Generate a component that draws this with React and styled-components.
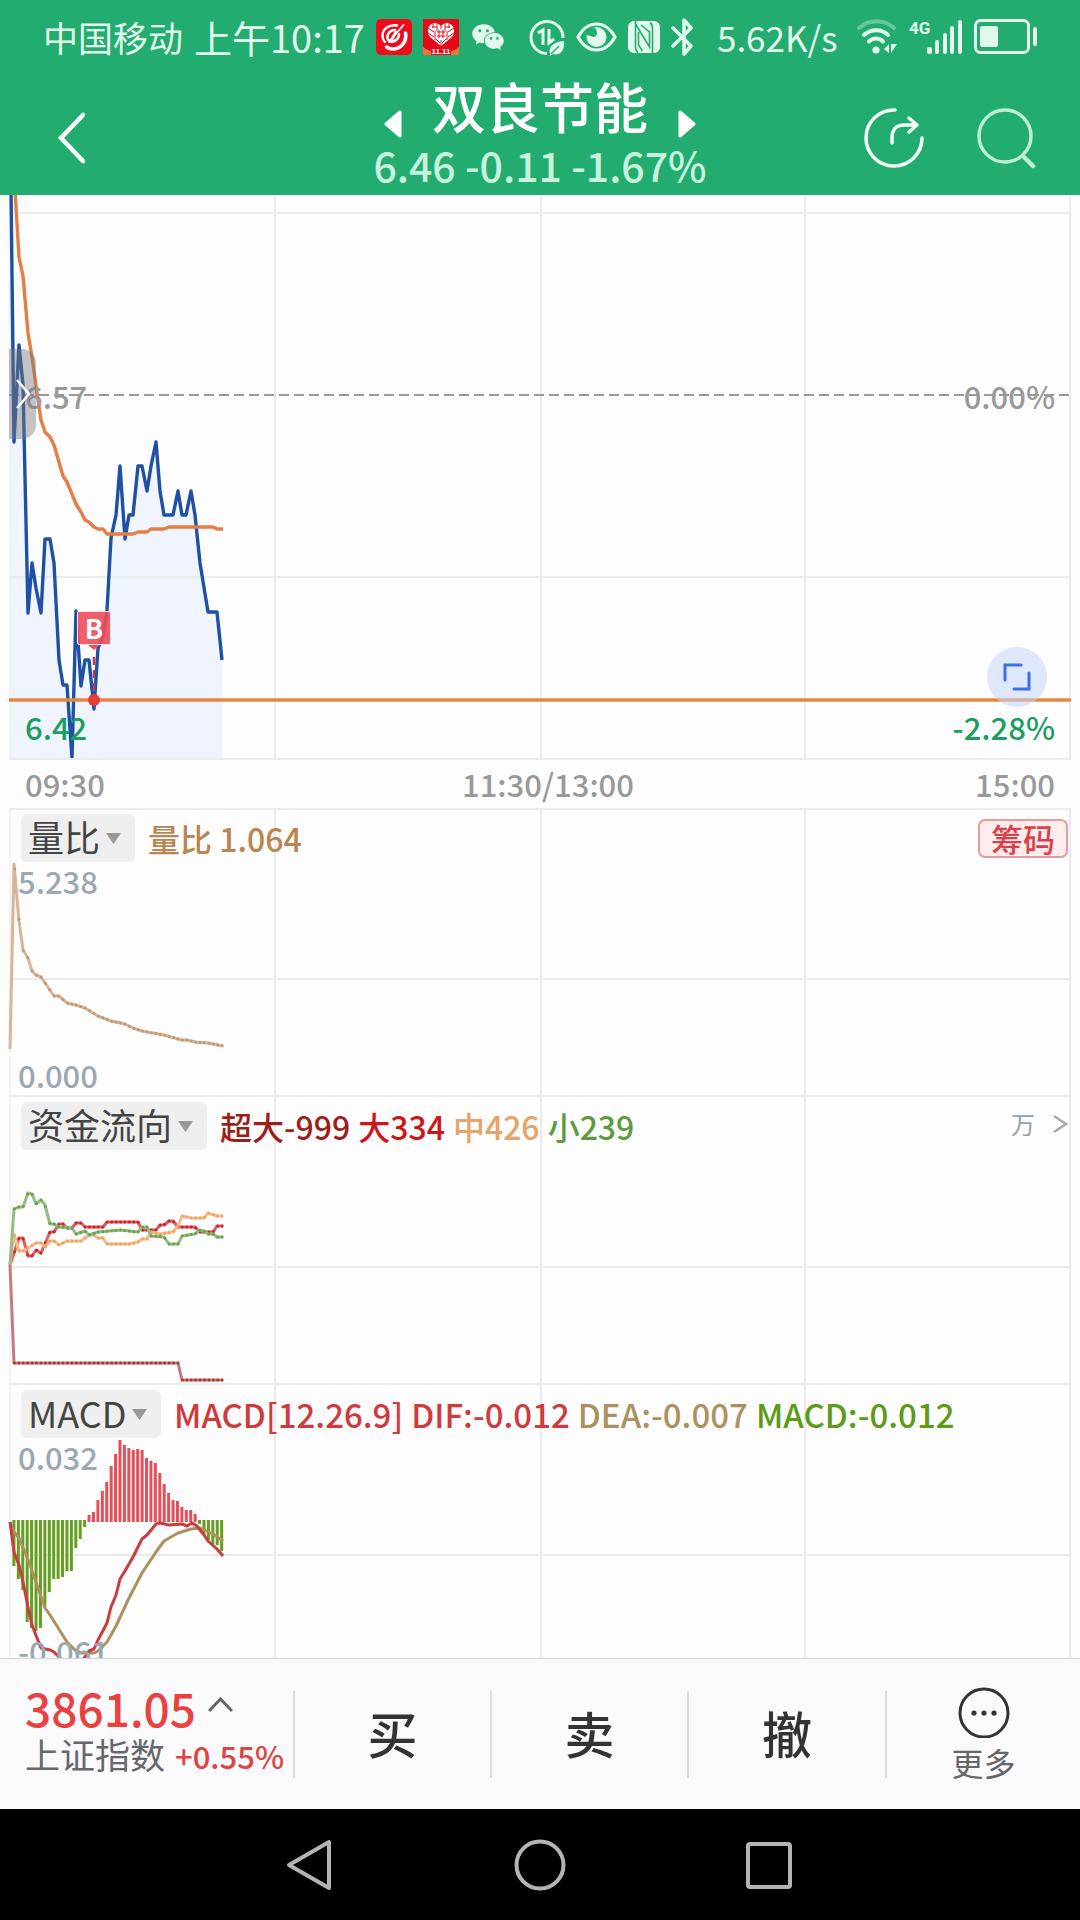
import React from "react";
import styled, { createGlobalStyle } from "styled-components";
import { AiFillWechat } from "react-icons/ai";

const GlobalStyle = createGlobalStyle`
  *, *::before, *::after { box-sizing: border-box; }
  body { margin: 0; background: #000; }
  body, button, select { font-family: "Noto Sans CJK SC", "Noto Sans", sans-serif; }
  button { margin: 0; padding: 0; border: 0; background: none; color: inherit; cursor: pointer; }
  svg { display: block; flex: none; }
`;

const Screen = styled.div`
  display: flex;
  flex-direction: column;
  height: 100vh;
  background: #fdfdfd;
`;

/* ---------- header ---------- */

const Header = styled.header`
  flex: none;
  background: #23ac6f;
  color: #fff;
`;

const StatusBar = styled.div`
  display: flex;
  align-items: center;
  justify-content: space-between;
  height: 74px;
  padding: 0 43px 1px 43px;
  color: #e2f8ec;
`;

const StatusGroup = styled.div`
  display: flex;
  align-items: center;
  gap: ${(p) => p.$gap}px;
`;

const StatusText = styled.span`
  font-size: ${(p) => p.$size}px;
  line-height: 44px;
  white-space: nowrap;
`;

const TitleBar = styled.div`
  display: grid;
  grid-template-columns: 1fr auto 1fr;
  align-items: end;
  padding: 0 43px 9px 56px;
`;

const TitleSide = styled.div`
  display: flex;
  justify-content: ${(p) => (p.$end ? "flex-end" : "flex-start")};
  gap: 50px;
  padding-bottom: 17px;
`;

const TitleCenter = styled.div`
  display: flex;
  flex-direction: column;
  align-items: center;
  gap: 4px;
  margin-right: 13px;
`;

const TitleRow = styled.div`
  display: flex;
  align-items: flex-end;
  gap: 30px;
`;

const StockName = styled.h1`
  margin: 0;
  font-size: 54px;
  line-height: 64px;
  font-weight: 500;
`;

const Quote = styled.div`
  font-size: 41px;
  line-height: 44px;
  font-weight: 500;
  color: #c8f2dd;
  white-space: pre;
`;

/* ---------- charts ---------- */

const Charts = styled.main`
  flex: 1;
  min-height: 0;
  overflow: hidden;
`;

const ChartArt = styled.svg`
  position: absolute;
  inset: 0;
  width: 100%;
  height: 100%;
`;

const PricePanel = styled.section`
  position: relative;
  display: flex;
  flex-direction: column;
  justify-content: flex-end;
  gap: 291px;
  height: 563px;
  padding: 0 25px 11px;
`;

const AxisRow = styled.div`
  position: relative;
  display: flex;
  justify-content: space-between;
  font-size: 31px;
  line-height: 40px;
  font-weight: 500;
  color: ${(p) => p.$color};
`;

const TimeAxis = styled.div`
  display: grid;
  grid-template-columns: 23fr 27fr auto;
  margin: 0 9px;
  padding: 0 16px;
  border-top: 2px solid #ebebeb;
  font-size: 31px;
  line-height: 48px;
  font-weight: 500;
  color: #999;
`;

const IndicatorPanel = styled.section`
  position: relative;
  display: flex;
  flex-direction: column;
  height: 288px;
  padding: 6px 12px 2px 18px;
`;

const PanelHead = styled.div`
  position: relative;
  display: flex;
  align-items: center;
  gap: 13px;
  margin-left: 3px;
`;

const Picker = styled.label`
  display: flex;
  align-items: center;
  height: 48px;
  padding-right: 13px;
  border-radius: 6px;
  background: #efefef;
`;

const PickerSelect = styled.select`
  appearance: none;
  height: 48px;
  margin: 0;
  padding: 0 4px 4px 7px;
  border: 0;
  background: none;
  color: #444;
  font-size: 36px;
  line-height: 44px;
`;

const Legend = styled.div`
  display: flex;
  gap: ${(p) => p.$gap}px;
  font-size: ${(p) => p.$size}px;
  line-height: 48px;
  font-weight: 500;
  white-space: nowrap;
`;

const LegendItem = styled.span`
  color: ${(p) => p.$color};
`;

const HeadEnd = styled.div`
  display: flex;
  align-items: center;
  align-self: ${(p) => (p.$top ? "flex-start" : "center")};
  gap: 18px;
  height: ${(p) => (p.$top ? 43 : 48)}px;
  margin-left: auto;
`;

const ChipButton = styled.button`
  height: 39px;
  padding: 0 11px;
  border: 2px solid #e59a9c;
  border-radius: 7px;
  background: #ffeded;
  color: #dc414b;
  font-size: 32px;
  line-height: 32px;
  font-weight: 500;
`;

const UnitText = styled.span`
  font-size: 24px;
  line-height: 36px;
  color: #91a1af;
`;

const LinkButton = styled.button`
  display: flex;
`;

const ScaleLabel = styled.div`
  position: relative;
  margin-top: ${(p) => (p.$bottom ? "auto" : "0")};
  font-size: 31px;
  line-height: 38px;
  font-weight: 500;
  color: #9aa8b3;
`;

const DrawerHandle = styled.button`
  position: absolute;
  left: 9px;
  top: 154px;
  display: flex;
  align-items: center;
  justify-content: center;
  width: 27px;
  height: 90px;
  border-radius: 0 14px 14px 0;
  background: rgba(120, 120, 120, 0.44);
`;

const ExpandButton = styled.button`
  position: absolute;
  right: 33px;
  bottom: 51px;
  display: flex;
  align-items: center;
  justify-content: center;
  width: 60px;
  height: 60px;
  border-radius: 50%;
  background: rgba(196, 214, 251, 0.55);
`;

const BuyFlag = styled.div`
  position: absolute;
  left: 77px;
  top: 416px;
  width: 34px;
  height: 34px;
  border: 1px solid #fde4e6;
  border-radius: 2px;
  background: rgba(238, 76, 90, 0.9);
  color: #fff;
  font-size: 27px;
  line-height: 32px;
  font-weight: 700;
  text-align: center;
`;

/* ---------- footer ---------- */

const TradeBar = styled.footer`
  flex: none;
  display: grid;
  grid-template-columns: 293fr 197fr 197fr 198fr 195fr;
  align-items: center;
  height: 151px;
  border-top: 1px solid #d3d4d8;
  background: #fafafc;
`;

const IndexButton = styled.button`
  display: flex;
  flex-direction: column;
  align-items: flex-start;
  padding: 0 0 8px 25px;
  text-align: left;
  white-space: nowrap;
`;

const IndexLine = styled.span`
  display: flex;
  align-items: ${(p) => p.$align || "center"};
  gap: ${(p) => p.$gap}px;
`;

const IndexValue = styled.span`
  font-size: 46px;
  line-height: 50px;
  font-weight: 500;
  color: #e8413f;
`;

const IndexName = styled.span`
  font-size: 35px;
  line-height: 44px;
  color: #66666b;
`;

const IndexChange = styled.span`
  font-size: 31px;
  line-height: 44px;
  font-weight: 500;
  color: #dd4442;
`;

const TradeButton = styled.button`
  height: 87px;
  padding-bottom: 4px;
  border-left: 2px solid #dcdcde;
  color: #333;
  font-size: 50px;
  line-height: 72px;
  font-weight: 500;
`;

const MoreButton = styled.button`
  display: flex;
  flex-direction: column;
  align-items: center;
  justify-content: center;
  gap: 4px;
  height: 87px;
  border-left: 2px solid #dcdcde;
  color: #666;
  font-size: 32px;
  line-height: 40px;
`;

const SystemNav = styled.nav`
  flex: none;
  display: flex;
  align-items: center;
  justify-content: center;
  gap: 178px;
  height: 111px;
  background: #000;
`;

/* ---------- chart data ---------- */

const STEP = 4.42;
const GRID_X = [275, 541, 805];

const PRICE = [[11,190],[14,442],[19,345],[23,385],[28,613],[32,563],[36,588],[41,613],[45,539],[50,539],[54,563],[59,660],[63,685],[67,685],[72,758],[76,611],[81,686],[85,660],[89,660],[94,709],[98,648],[103,636],[107,610],[111,538],[116,515],[120,466],[125,539],[129,515],[133,515],[138,466],[142,466],[147,491],[151,466],[156,442],[160,491],[164,515],[173,515],[178,491],[182,515],[186,515],[191,491],[195,515],[200,563],[208,612],[217,612],[222,660]];
const AVERAGE = [[15,190],[19,257],[23,276],[28,333],[32,357],[37,393],[41,420],[45,432],[50,437],[54,445],[63,476],[67,482],[76,504],[81,512],[85,520],[89,522],[94,527],[98,529],[103,529],[107,534],[133,534],[138,532],[147,532],[151,529],[164,529],[169,527],[213,527],[217,529],[223,529]];
const RATIO = [[10,1049],[14,864],[19,921],[23,950],[28,958],[32,971],[36,975],[41,977],[54,996],[59,996],[67,1003],[76,1005],[85,1008],[98,1016],[111,1021],[125,1024],[133,1028],[142,1031],[164,1035],[182,1040],[187,1040],[195,1042],[208,1043],[223,1046]];
const FLOW_SMALL = [[10,1265],[14,1209],[19,1207],[23,1207],[28,1193],[32,1194],[36,1204],[41,1200],[45,1205],[50,1224],[54,1224],[59,1227],[72,1228],[76,1234],[85,1231],[89,1235],[98,1232],[120,1230],[138,1232],[142,1227],[147,1227],[151,1236],[164,1237],[169,1244],[178,1244],[182,1236],[195,1234],[199,1230],[204,1231],[208,1234],[213,1234],[217,1237],[223,1237]];
const FLOW_LARGE = [[10,1265],[14,1253],[19,1238],[23,1238],[28,1256],[32,1256],[36,1250],[41,1253],[50,1232],[54,1232],[59,1224],[63,1224],[67,1228],[72,1228],[76,1223],[81,1223],[85,1227],[103,1227],[107,1222],[138,1222],[142,1230],[156,1230],[160,1225],[164,1225],[169,1221],[173,1221],[178,1227],[195,1227],[200,1232],[213,1232],[217,1226],[223,1226]];
const FLOW_MEDIUM = [[10,1265],[14,1234],[19,1251],[23,1251],[28,1248],[36,1243],[41,1243],[45,1247],[50,1241],[54,1241],[59,1245],[67,1241],[81,1241],[89,1235],[94,1235],[98,1238],[103,1238],[107,1244],[129,1244],[138,1242],[142,1239],[147,1239],[151,1232],[160,1234],[173,1232],[178,1226],[182,1216],[191,1218],[204,1218],[208,1213],[217,1216],[223,1216]];
const FLOW_HUGE = [[10,1265],[14,1363],[178,1363],[182,1380],[223,1380]];
const DIF = [[10,1522],[14,1552],[19,1565],[23,1582],[28,1607],[32,1625],[37,1638],[41,1648],[50,1650],[54,1652],[60,1658],[67,1668],[77,1668],[85,1657],[89,1651],[94,1649],[98,1640],[107,1623],[111,1607],[116,1595],[120,1579],[125,1571],[133,1557],[142,1539],[147,1535],[156,1524],[160,1523],[169,1525],[182,1524],[187,1526],[192,1523],[197,1526],[204,1535],[208,1541],[217,1549],[223,1556]];
const DEA = [[10,1522],[14,1532],[19,1538],[27,1557],[36,1582],[45,1608],[50,1615],[67,1642],[76,1651],[81,1653],[94,1653],[98,1651],[107,1642],[116,1626],[129,1598],[142,1573],[156,1552],[164,1541],[178,1533],[191,1529],[200,1528],[213,1534],[223,1541]];
const BARS = [
  -46,-59,-70,-102,-108,-111,-108,-87,-72,-59,-59,-57,-51,-51,-28,-19,-7,
  7,10,22,31,40,56,68,82,77,74,72,73,72,64,61,59,49,38,29,22,21,15,12,12,8,
  -4,-14,-20,-24,-25,-31,
];

const toPoints = (data) => data.map((p) => p.join(",")).join(" ");

const valueAt = (data, x) => {
  const i = data.findIndex((p) => p[0] >= x);
  if (i <= 0) return data[i === 0 ? 0 : data.length - 1][1];
  const [x0, y0] = data[i - 1];
  const [x1, y1] = data[i];
  return y0 + ((y1 - y0) * (x - x0)) / (x1 - x0);
};

function DottedLine({ data, color, dot }) {
  const xs = Array.from({ length: 48 }, (_, i) => 10 + STEP * (i + 1));
  return (
    <g>
      <polyline points={toPoints(data)} fill="none" stroke={color} strokeWidth="3" strokeLinejoin="round" />
      {xs.map((x) => (
        <circle key={x} cx={x} cy={valueAt(data, x)} r="1.5" fill={dot} />
      ))}
    </g>
  );
}

function Grid({ top, bottom, rows }) {
  return (
    <g stroke="#ebebeb" strokeWidth="2">
      {GRID_X.map((x) => (
        <line key={x} x1={x} x2={x} y1={top} y2={bottom} />
      ))}
      <line x1="10" x2="10" y1={top} y2={bottom} strokeWidth="1" />
      <line x1="1070" x2="1070" y1={top} y2={bottom} />
      {rows.map((y) => (
        <line key={y} x1="9" x2="1071" y1={y} y2={y} />
      ))}
    </g>
  );
}

function Art({ top, height, children }) {
  return (
    <ChartArt viewBox={`0 ${top} 1080 ${height}`} preserveAspectRatio="none" aria-hidden="true">
      {children}
    </ChartArt>
  );
}

/* ---------- icons ---------- */

const StockAppIcon = () => (
  <svg width="36" height="36" viewBox="0 0 36 36">
    <rect width="36" height="36" rx="5" fill="#f1091c" />
    <g fill="none" stroke="#fff" strokeLinecap="round">
      <path d="M21 6.500C13 5 6.500 10 6.500 16.500c0 3 1 5 2.500 6.500" strokeWidth="2.400" />
      <path d="M29.500 14c1.500 8-3.500 15.500-12 16-3 .2-5-.5-7-2" strokeWidth="3.600" />
      <path d="M19 11c-5 0-8 4-7.500 8 .5 3 4 4.500 7 3s4.500-4 4.500-7" strokeWidth="2.600" />
      <path d="M27.500 6L13 23" strokeWidth="1.800" />
      <path d="M20 13l-4 7" strokeWidth="3" />
    </g>
  </svg>
);

const SaleAppIcon = () => (
  <svg width="36" height="36" viewBox="0 0 36 36">
    <rect width="36" height="36" fill="#e60a18" />
    <path d="M0 28v8h36v-8c-5 4-11 5.500-18 5.500S5 32 0 28z" fill="#f0713a" />
    <path d="M18 27L7 18C3 13 5 5 11 4c3-.5 5.500 1 7 3 1.500-2 4-3.500 7-3 6 1 8 9 4 14z" fill="#fff" />
    <g stroke="#e60a18" strokeWidth="1" fill="none">
      <path d="M10 4v5M14 4v8M22 4v8M26 4v5M5 9l6 4M5 14l6 4M31 9l-6 4M31 14l-6 4M18 6v4M18 21v7M12 12v9M24 12v9M9 8h5M22 8h5" />
      <path d="M14 13h8M14 17h8M16 11v8M20 11v8M13 20l4 4M23 20l-4 4" />
    </g>
    <path d="M8 28h20v8H8z" fill="#e60a18" />
    <text x="18" y="35" fill="#fff" fontSize="8" fontWeight="700" textAnchor="middle" fontFamily="Liberation Sans, sans-serif">11.11</text>
  </svg>
);

const DataSaverIcon = () => (
  <svg width="36" height="38" viewBox="0 0 36 38" fill="none" stroke="currentColor">
    <path d="M18 35.500A16 16 0 1 1 34 20" strokeWidth="3" />
    <path d="M9 15l5-3v15M20 11v14l5-4" strokeWidth="3" />
    <path d="M21 36c-2-7 3-12 14-13 1 9-4 15-11 13l-3 2z" fill="currentColor" stroke="none" />
    <path d="M22 36l8-8" stroke="#23ac6f" strokeWidth="1.500" />
  </svg>
);

const EyeIcon = () => (
  <svg width="41" height="30" viewBox="0 0 41 30">
    <path d="M2 15C7 6 13 2 20.500 2S34 6 39 15c-5 9-11 13-18.500 13S7 24 2 15z" fill="none" stroke="currentColor" strokeWidth="3.200" />
    <circle cx="20.500" cy="15" r="10" fill="currentColor" />
    <path d="M12 8c4-4 9-3 9 3 0 4-4 5-6 3-2 0-4-1-5-2z" fill="#23ac6f" />
  </svg>
);

const NfcIcon = () => (
  <svg width="32" height="34" viewBox="0 0 32 34">
    <rect y="1" width="32" height="32" rx="6" fill="currentColor" />
    <path d="M7.500 1v26c0 3 1 4.500 2.500 5.500M7.500 4L21.500 27V12L13 5M10.500 12v13l4 6M24.500 33V8c0-3-1-4.500-2.500-5.500" fill="none" stroke="#23ac6f" strokeWidth="1.600" />
  </svg>
);

const BluetoothIcon = () => (
  <svg width="23" height="38" viewBox="0 0 23 38" fill="none" stroke="currentColor" strokeWidth="3.500" strokeLinejoin="round" strokeLinecap="round">
    <path d="M2 10l18 18-7 8V2l7 8L2 28" />
  </svg>
);

const WifiIcon = () => (
  <svg width="40" height="36" viewBox="0 0 40 36" fill="none" stroke="currentColor" strokeWidth="4" strokeLinecap="round">
    <path d="M2 9c10-9 25-9 35 0" opacity=".35" />
    <path d="M7 16c7-6.500 18-6.500 24 0" />
    <path d="M12 22.500c4-4 10-4 14 0" />
    <circle cx="19" cy="31" r="3.600" fill="currentColor" stroke="none" />
    <path d="M32 25v9l-5-4zM34 34v-9h6z" fill="currentColor" stroke="none" />
  </svg>
);

const SignalIcon = () => (
  <svg width="53" height="42" viewBox="0 -3 53 42" fill="currentColor">
    <text x="0" y="15" fontSize="17" fontWeight="700" fontFamily="Roboto, sans-serif">4G</text>
    <rect x="18" y="28" width="5" height="7" rx="2" />
    <rect x="26" y="21" width="4" height="14" rx="2" />
    <rect x="34" y="14" width="4" height="21" rx="2" />
    <rect x="41" y="7" width="4" height="28" rx="2" />
    <rect x="49" y="1" width="4" height="34" rx="2" />
  </svg>
);

const BatteryIcon = () => (
  <svg width="63" height="35" viewBox="0 0 63 35">
    <rect x="1.500" y="1.500" width="53" height="32" rx="5" fill="none" stroke="currentColor" strokeWidth="3" />
    <rect x="6" y="7" width="18" height="21" rx="2" fill="currentColor" />
    <rect x="59" y="8" width="4" height="19" rx="2" fill="currentColor" />
  </svg>
);

const CaretIcon = () => (
  <svg width="17" height="12" viewBox="0 0 17 12">
    <path d="M1 1h15L8.500 12z" fill="#999" />
  </svg>
);

/* ---------- page ---------- */

function IndicatorPicker({ name }) {
  return (
    <Picker>
      <PickerSelect aria-label="指标" defaultValue={name}>
        <option>{name}</option>
      </PickerSelect>
      <CaretIcon />
    </Picker>
  );
}

export default function App() {
  return (
    <Screen>
      <GlobalStyle />
      <Header>
        <StatusBar>
          <StatusGroup $gap={23}>
            <StatusGroup $gap={11}>
              <StatusText $size={35}>中国移动</StatusText>
              <StatusText $size={38}>上午10:17</StatusText>
              <StockAppIcon />
              <SaleAppIcon />
              <AiFillWechat size={36} />
            </StatusGroup>
            <StatusGroup $gap={11}>
              <DataSaverIcon />
              <EyeIcon />
              <NfcIcon />
              <BluetoothIcon />
            </StatusGroup>
            <StatusText $size={35}>5.62K/s</StatusText>
          </StatusGroup>
          <StatusGroup $gap={12}>
            <WifiIcon />
            <SignalIcon />
            <BatteryIcon />
          </StatusGroup>
        </StatusBar>
        <TitleBar>
          <TitleSide>
            <LinkButton aria-label="返回">
              <svg width="32" height="62" viewBox="0 0 32 62">
                <path d="M27 8L5 31l22 23" fill="none" stroke="#fff" strokeWidth="4.500" strokeLinecap="round" />
              </svg>
            </LinkButton>
          </TitleSide>
          <TitleCenter>
            <TitleRow>
              <LinkButton aria-label="上一只">
                <svg width="18" height="28" viewBox="0 0 18 28">
                  <path d="M16 2v24L2 14z" fill="#fff" stroke="#fff" strokeWidth="3" strokeLinejoin="round" />
                </svg>
              </LinkButton>
              <StockName>双良节能</StockName>
              <LinkButton aria-label="下一只">
                <svg width="18" height="28" viewBox="0 0 18 28">
                  <path d="M2 2v24l14-12z" fill="#fff" stroke="#fff" strokeWidth="3" strokeLinejoin="round" />
                </svg>
              </LinkButton>
            </TitleRow>
            <Quote>6.46 -0.11 -1.67%</Quote>
          </TitleCenter>
          <TitleSide $end>
            <LinkButton aria-label="分享">
              <svg width="62" height="62" viewBox="0 0 62 62" fill="none" stroke="#f2fff8" strokeWidth="3.500" strokeLinecap="round" strokeLinejoin="round">
                <path d="M32 3A28 28 0 1 0 59 31" />
                <path d="M29 36v-5c0-8 4-13 12-13h12M46 11l8 7-8 7" />
              </svg>
            </LinkButton>
            <LinkButton aria-label="搜索">
              <svg width="62" height="62" viewBox="0 0 62 62" fill="none" stroke="#bcefd5" strokeWidth="3.500" strokeLinecap="round">
                <circle cx="30" cy="29" r="26" />
                <path d="M49 50l9 9" strokeWidth="4.500" />
              </svg>
            </LinkButton>
          </TitleSide>
        </TitleBar>
      </Header>

      <Charts>
        <PricePanel>
          <Art top={195} height={563}>
            <polygon points={`10,195 ${toPoints(PRICE)} 222,758 10,758`} fill="#eff4fe" />
            <Grid top={195} bottom={758} rows={[213, 577]} />
            <line x1="9" x2="1070" y1="395" y2="395" stroke="#999" strokeWidth="2" strokeDasharray="10 5" />
            <polyline points={toPoints(PRICE)} fill="none" stroke="#1e50a4" strokeWidth="3.400" strokeLinejoin="round" />
            <polyline points={toPoints(AVERAGE)} fill="none" stroke="#e57e46" strokeWidth="3.400" strokeLinejoin="round" />
            <line x1="9" x2="1071" y1="700" y2="700" stroke="#e5853f" strokeWidth="3.400" />
            <path d="M88 645h12l-6 5z" fill="#ee4c5a" />
            <line x1="94" x2="94" y1="657" y2="694" stroke="#c03a58" strokeWidth="2.500" strokeDasharray="8 5" />
            <circle cx="94" cy="700" r="6" fill="#e63c36" />
          </Art>
          <AxisRow $color="#999">
            <span>6.57</span>
            <span>0.00%</span>
          </AxisRow>
          <AxisRow $color="#1a9e5f">
            <span>6.42</span>
            <span>-2.28%</span>
          </AxisRow>
          <DrawerHandle aria-label="展开列表">
            <svg width="16" height="32" viewBox="0 0 16 32">
              <path d="M2 2l12 14L2 30" fill="none" stroke="#fff" strokeWidth="2.500" />
            </svg>
          </DrawerHandle>
          <BuyFlag>B</BuyFlag>
          <ExpandButton aria-label="全屏">
            <svg width="28" height="28" viewBox="0 0 28 28" fill="none" stroke="#3672e4" strokeWidth="3" strokeLinecap="round">
              <path d="M2 17V2h16M11 26h15V10" />
            </svg>
          </ExpandButton>
        </PricePanel>

        <TimeAxis>
          <span>09:30</span>
          <span>11:30/13:00</span>
          <span>15:00</span>
        </TimeAxis>

        <IndicatorPanel>
          <Art top={808} height={288}>
            <Grid top={808} bottom={1096} rows={[809, 979, 1096]} />
            <DottedLine data={RATIO} color="#d8b596" dot="#c09878" />
          </Art>
          <PanelHead>
            <IndicatorPicker name="量比" />
            <Legend $gap={8} $size={32}>
              <LegendItem $color="#b98550">量比 1.064</LegendItem>
            </Legend>
            <HeadEnd>
              <ChipButton>筹码</ChipButton>
            </HeadEnd>
          </PanelHead>
          <ScaleLabel>5.238</ScaleLabel>
          <ScaleLabel $bottom>0.000</ScaleLabel>
        </IndicatorPanel>

        <IndicatorPanel>
          <Art top={1096} height={288}>
            <Grid top={1096} bottom={1384} rows={[1096, 1267, 1384]} />
            <DottedLine data={FLOW_HUGE} color="#c47c7a" dot="#a23a3a" />
            <DottedLine data={FLOW_LARGE} color="#e05a5e" dot="#c8232c" />
            <DottedLine data={FLOW_MEDIUM} color="#f3be8c" dot="#eaa566" />
            <DottedLine data={FLOW_SMALL} color="#94bd80" dot="#6aa04e" />
          </Art>
          <PanelHead>
            <IndicatorPicker name="资金流向" />
            <Legend $gap={8} $size={32}>
              <LegendItem $color="#9c1f1b">超大-999</LegendItem>
              <LegendItem $color="#d01418">大334</LegendItem>
              <LegendItem $color="#e8a366">中426</LegendItem>
              <LegendItem $color="#5d9a40">小239</LegendItem>
            </Legend>
            <HeadEnd $top>
              <UnitText>万</UnitText>
              <LinkButton aria-label="详情">
                <svg width="15" height="20" viewBox="0 0 15 20">
                  <path d="M1 2l12 8-12 8" fill="none" stroke="#aaa" strokeWidth="2.500" />
                </svg>
              </LinkButton>
            </HeadEnd>
          </PanelHead>
        </IndicatorPanel>

        <IndicatorPanel>
          <Art top={1384} height={288}>
            <Grid top={1384} bottom={1672} rows={[1384, 1555]} />
            {BARS.map((v, i) => (
              <rect
                key={i}
                x={9 + STEP * (i + 1) - 1}
                y={v < 0 ? 1520 : 1522 - v}
                width="3"
                height={Math.abs(v)}
                fill={v < 0 ? "#64a020" : "#e2505a"}
              />
            ))}
            <polyline points={toPoints(DEA)} fill="none" stroke="#ad905f" strokeWidth="3" strokeLinejoin="round" />
            <polyline points={toPoints(DIF)} fill="none" stroke="#cb3c3e" strokeWidth="3" strokeLinejoin="round" />
          </Art>
          <PanelHead>
            <IndicatorPicker name="MACD" />
            <Legend $gap={8} $size={33}>
              <LegendItem $color="#cf3b3d">MACD[12.26.9]</LegendItem>
              <LegendItem $color="#cf3b3d">DIF:-0.012</LegendItem>
              <LegendItem $color="#ad905f">DEA:-0.007</LegendItem>
              <LegendItem $color="#5c9a18">MACD:-0.012</LegendItem>
            </Legend>
          </PanelHead>
          <ScaleLabel>0.032</ScaleLabel>
          <ScaleLabel $bottom>-0.061</ScaleLabel>
        </IndicatorPanel>
      </Charts>

      <TradeBar>
        <IndexButton>
          <IndexLine $gap={12}>
            <IndexValue>3861.05</IndexValue>
            <svg width="25" height="20" viewBox="0 0 25 20">
              <path d="M1 14L12.500 2 24 14" fill="none" stroke="#666" strokeWidth="3" />
            </svg>
          </IndexLine>
          <IndexLine $gap={10} $align="baseline">
            <IndexName>上证指数</IndexName>
            <IndexChange>+0.55%</IndexChange>
          </IndexLine>
        </IndexButton>
        <TradeButton>买</TradeButton>
        <TradeButton>卖</TradeButton>
        <TradeButton>撤</TradeButton>
        <MoreButton>
          <svg width="52" height="52" viewBox="0 0 52 52">
            <circle cx="26" cy="27" r="24" fill="none" stroke="#333" strokeWidth="3" />
            <g fill="#333">
              <circle cx="16" cy="27" r="2.600" />
              <circle cx="26" cy="27" r="2.600" />
              <circle cx="36" cy="27" r="2.600" />
            </g>
          </svg>
          更多
        </MoreButton>
      </TradeBar>

      <SystemNav>
        <LinkButton aria-label="后退">
          <svg width="52" height="52" viewBox="0 0 52 52">
            <path d="M45 3v46L5 26z" fill="none" stroke="#b4b4b4" strokeWidth="4" strokeLinejoin="round" />
          </svg>
        </LinkButton>
        <LinkButton aria-label="主屏幕">
          <svg width="52" height="52" viewBox="0 0 52 52">
            <circle cx="26" cy="26" r="23.500" fill="none" stroke="#b4b4b4" strokeWidth="4" />
          </svg>
        </LinkButton>
        <LinkButton aria-label="最近任务">
          <svg width="52" height="52" viewBox="0 0 52 52">
            <rect x="4" y="5" width="42" height="43" rx="2" fill="none" stroke="#b4b4b4" strokeWidth="4" />
          </svg>
        </LinkButton>
      </SystemNav>
    </Screen>
  );
}
